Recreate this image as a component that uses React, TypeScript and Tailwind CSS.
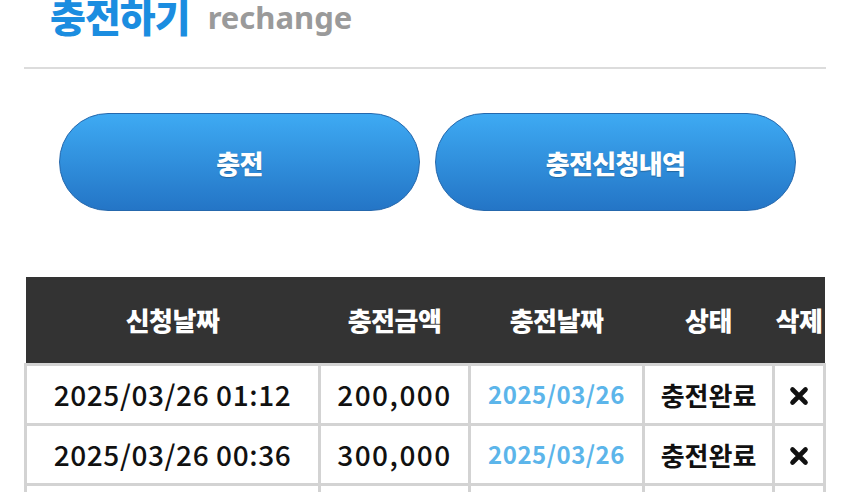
import React from "react";

const rows = [
  { reqDate: "2025/03/26 01:12", amount: "200,000", doneDate: "2025/03/26", status: "충전완료" },
  { reqDate: "2025/03/26 00:36", amount: "300,000", doneDate: "2025/03/26", status: "충전완료" },
  { reqDate: "2025/03/25 22:08", amount: "100,000", doneDate: "2025/03/25", status: "충전완료" },
];

const DeleteIcon = () => (
  <svg width="22" height="20" viewBox="0 0 22 20" className="inline-block">
    <path d="M4.5 3.5 L17.5 16.5 M17.5 3.5 L4.5 16.5" stroke="#111" strokeWidth="4.6" strokeLinecap="round" />
  </svg>
);

export default function App() {
  return (
    <div
      className="w-[850px] h-[492px] overflow-hidden bg-white px-6"
      style={{ fontFamily: '"Noto Sans CJK KR", "Noto Sans", sans-serif' }}
    >
      {/* TITLE */}
      <div className="flex items-end gap-[18px] pl-[26px] -mt-[17px] h-[52px]">
        <h1 className="text-[39px] leading-none font-black text-[#1b8de0] tracking-tight">충전하기</h1>
        <span
          className="text-[31px] leading-none font-bold text-[#9a9a9a] pb-[2px]"
          style={{ fontFamily: '"Noto Sans", sans-serif' }}
        >
          rechange
        </span>
      </div>

      {/* DIVIDER */}
      <div className="mt-[32px] border-t-2 border-[#dcdcdc]" />

      {/* ACTION BUTTONS */}
      <div className="ml-[35px] mt-[44px] grid w-[737px] grid-cols-2 gap-[15px]">
        {["충전", "충전신청내역"].map((label) => (
          <button
            key={label}
            className="h-[98px] rounded-full border border-[#2568ad] bg-gradient-to-b from-[#3eaaf3] to-[#2475c6] text-[26px] font-black text-white tracking-tight [text-shadow:0_1px_1px_rgba(0,0,0,0.25)]"
          >
            {label}
          </button>
        ))}
      </div>

      {/* HISTORY TABLE */}
      <table className="mt-[66px] w-[799px] table-fixed border-collapse">
        <colgroup>
          <col className="w-[294px]" />
          <col className="w-[150px]" />
          <col className="w-[174px]" />
          <col className="w-[130px]" />
          <col className="w-[51px]" />
        </colgroup>
        <thead>
          <tr className="bg-[#333333] text-white">
            {["신청날짜", "충전금액", "충전날짜", "상태", "삭제"].map((h) => (
              <th key={h} className="h-[87px] p-0 text-[26px] font-black tracking-[-0.5px] whitespace-nowrap">
                {h}
              </th>
            ))}
          </tr>
        </thead>
        <tbody>
          {rows.map((r) => (
            <tr key={r.reqDate} className="text-center">
              <td className="h-[60px] border-[3px] border-[#d3d3d3] text-[28px] font-medium tracking-[0.6px] text-[#111] whitespace-nowrap">
                {r.reqDate}
              </td>
              <td className="border-[3px] border-[#d3d3d3] text-[28px] font-medium tracking-[1.5px] text-[#111]">{r.amount}</td>
              <td className="border-[3px] border-[#d3d3d3] text-[24px] font-bold tracking-[0.5px] text-[#5cb5ea]">{r.doneDate}</td>
              <td className="border-[3px] border-[#d3d3d3] text-[26px] font-bold text-[#111]">{r.status}</td>
              <td className="border-[3px] border-[#d3d3d3]">
                <DeleteIcon />
              </td>
            </tr>
          ))}
        </tbody>
      </table>
    </div>
  );
}
